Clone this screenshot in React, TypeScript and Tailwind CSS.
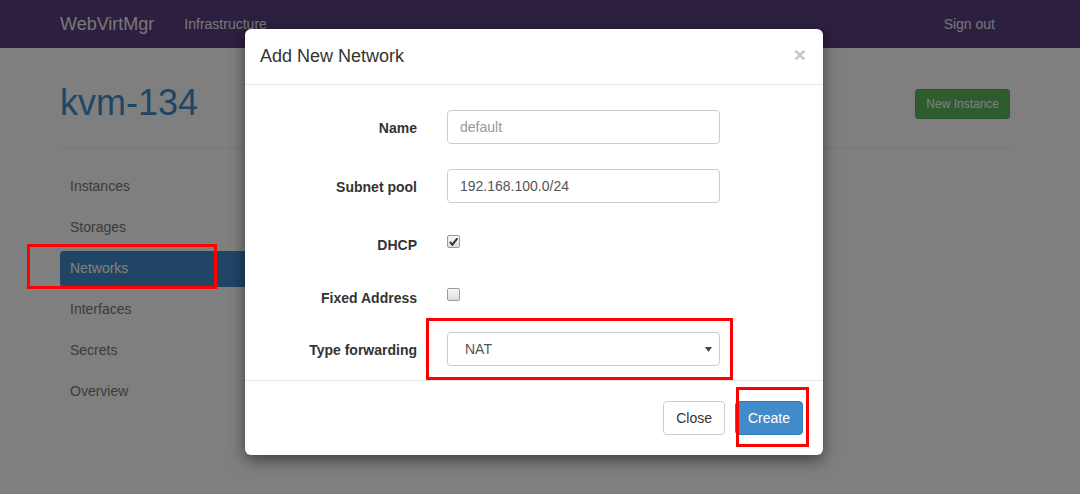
import React from "react";

const menu = ["Instances", "Storages", "Networks", "Interfaces", "Secrets", "Overview"];

const Check = ({ checked }: { checked?: boolean }) => (
  <span className="mb-[6px] flex h-[13px] w-[13px] items-center justify-center rounded-[2px] border border-[#9a9a9a] bg-gradient-to-b from-[#f6f6f6] to-[#dedede]">
    {checked && (
      <svg width="11" height="11" viewBox="0 0 11 11">
        <path d="M2 6l2.4 2.6L9.4 2.4" fill="none" stroke="#333" strokeWidth="2" />
      </svg>
    )}
  </span>
);

const Row = ({ label, children, className }: { label: string; children: React.ReactNode; className?: string }) => (
  <div className={"flex h-[34px] items-center " + (className ?? "")}>
    <label className="w-[157px] pt-[2px] text-right text-[14px] font-bold text-[#333]">{label}</label>
    <div className="ml-[30px] flex h-full w-[273px] items-center">{children}</div>
  </div>
);

const App = () => {
  return (
    <div className="relative h-[494px] w-[1080px] overflow-hidden bg-white font-['Liberation_Sans',Arial,sans-serif]">
      <nav className="flex h-[48px] items-center bg-[#583e80] pl-[60px] pr-[85px] text-[#eee]">
        <span className="text-[18px]">WebVirtMgr</span>
        <span className="ml-[30px] text-[14px]">Infrastructure</span>
        <span className="ml-auto text-[14px]">Sign out</span>
      </nav>

      <main className="px-[60px] pr-[70px]">
        <div className="flex items-start justify-between border-b border-[#eee] pb-[25px] pt-[35px]">
          <h1 className="text-[36px] leading-[1.1] text-[#428bca]">kvm-134</h1>
          <button className="mt-[6px] h-[30px] rounded-[3px] border border-[#4cae4c] bg-[#5cb85c] px-[10px] text-[12px] text-white">
            New Instance
          </button>
        </div>
        <ul className="mt-[20px] flex w-[200px] flex-col gap-[5px]">
          {menu.map((m) => (
            <li
              key={m}
              className={
                "flex h-[36px] items-center rounded-[4px] px-[10px] text-[14px] " +
                (m === "Networks" ? "bg-[#428bca] text-white" : "text-[#777]")
              }
            >
              {m}
            </li>
          ))}
        </ul>
      </main>

      <div className="absolute inset-0 bg-black/50" />

      <div className="absolute left-[245px] top-[29px] w-[578px] rounded-[6px] bg-white shadow-[0_5px_15px_rgba(0,0,0,0.5)]">
        <div className="flex h-[56px] items-center justify-between border-b border-[#e5e5e5] px-[15px]">
          <h4 className="text-[18px] text-[#333]">Add New Network</h4>
          <span className="mb-[4px] mr-[2px] text-[21px] font-bold leading-none text-[#c5c5c5]">×</span>
        </div>
        <div className="border-b border-[#e5e5e5] px-[15px] pb-[14px] pt-[25px]">
          <Row label="Name">
            <div className="flex h-[34px] w-full items-center rounded-[4px] border border-[#ccc] px-[12px] text-[14px] text-[#999]">
              default
            </div>
          </Row>
          <Row label="Subnet pool" className="mt-[25px]">
            <div className="flex h-[34px] w-full items-center rounded-[4px] border border-[#ccc] px-[12px] text-[14px] text-[#555]">
              192.168.100.0/24
            </div>
          </Row>
          <Row label="DHCP" className="mt-[24px]">
            <Check checked />
          </Row>
          <Row label="Fixed Address" className="mt-[19px]">
            <Check />
          </Row>
          <Row label="Type forwarding" className="mt-[18px]">
            <div className="flex h-[34px] w-full items-center justify-between rounded-[4px] border border-[#ccc] pl-[17px] pr-[7px] text-[14px] text-[#555]">
              NAT
              <svg width="7" height="5" viewBox="0 0 7 5">
                <path d="M0 0h7L3.5 5z" fill="#444" />
              </svg>
            </div>
          </Row>
        </div>
        <div className="flex justify-end gap-[10px] px-[20px] pb-[20px] pt-[20px]">
          <button className="h-[34px] rounded-[4px] border border-[#ccc] bg-white px-[12px] text-[14px] text-[#333]">
            Close
          </button>
          <button className="h-[34px] rounded-[4px] border border-[#357ebd] bg-[#428bca] px-[12px] text-[14px] text-white">
            Create
          </button>
        </div>
      </div>

      <div className="absolute left-[27px] top-[244px] h-[45px] w-[190px] border-[3px] border-[#ff0000]" />
      <div className="absolute left-[426px] top-[318px] h-[62px] w-[307px] border-[3px] border-[#ff0000]" />
      <div className="absolute left-[736px] top-[387px] h-[60px] w-[73px] border-[3px] border-[#ff0000]" />
    </div>
  );
};

export default App;
